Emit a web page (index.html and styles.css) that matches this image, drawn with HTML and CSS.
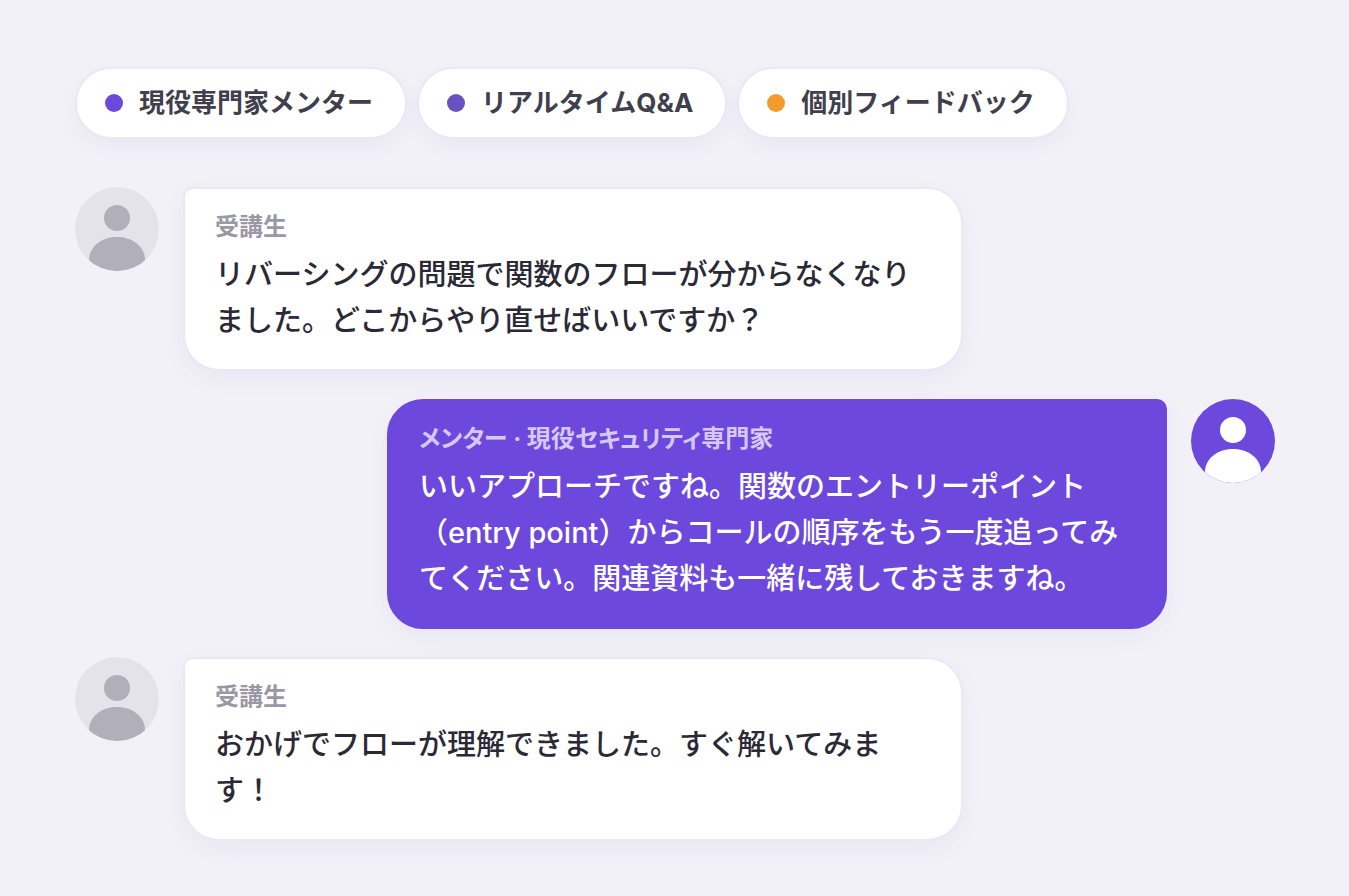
FILE: index.html
```
<!DOCTYPE html>
<html lang="ja">
<head>
    <meta charset="UTF-8">
    <meta name="viewport" content="width=device-width, initial-scale=1.0">
    <title>メンター Q&amp;A</title>
    <link rel="stylesheet" href="styles.css">
</head>
<body>
    <main class="container">
        <ul class="chips">
            <li class="chip"><span class="dot"></span>現役専門家メンター</li>
            <li class="chip"><span class="dot dot-indigo"></span>リアルタイムQ&amp;A</li>
            <li class="chip"><span class="dot dot-orange"></span>個別フィードバック</li>
        </ul>

        <div class="chat">
            <div class="message">
                <svg class="avatar" viewBox="0 0 84 84" aria-hidden="true">
                    <circle cx="42" cy="31" r="13"/>
                    <path d="M14 73C14 60 26 50 42 50S70 60 70 73V84H14Z"/>
                </svg>
                <div class="bubble">
                    <div class="name">受講生</div>
                    <p>リバーシングの問題で関数のフローが分からなくなりました。どこからやり直せばいいですか？</p>
                </div>
            </div>

            <div class="message mentor">
                <svg class="avatar" viewBox="0 0 84 84" aria-hidden="true">
                    <circle cx="42" cy="31" r="13"/>
                    <path d="M14 73C14 60 26 50 42 50S70 60 70 73V84H14Z"/>
                </svg>
                <div class="bubble">
                    <div class="name">メンター · 現役セキュリティ専門家</div>
                    <p>いいアプローチですね。関数のエントリーポイント（entry point）からコールの順序をもう一度追ってみてください。関連資料も一緒に残しておきますね。</p>
                </div>
            </div>

            <div class="message">
                <svg class="avatar" viewBox="0 0 84 84" aria-hidden="true">
                    <circle cx="42" cy="31" r="13"/>
                    <path d="M14 73C14 60 26 50 42 50S70 60 70 73V84H14Z"/>
                </svg>
                <div class="bubble">
                    <div class="name">受講生</div>
                    <p>おかげでフローが理解できました。すぐ解いてみます！</p>
                </div>
            </div>
        </div>
    </main>
</body>
</html>
```
FILE: styles.css
```
* {
    box-sizing: border-box;
}
body {
    margin: 0;
    background-color: #f2f1f8;
    color: #2b2936;
    font-family: Inter, "Noto Sans CJK JP", sans-serif;
}
.container {
    padding: 67px 74px 55px 75px;
}
.chips {
    display: flex;
    flex-wrap: wrap;
    gap: 10px;
    margin: 0 0 48px;
    padding: 0;
    list-style: none;
}
.chip {
    display: flex;
    align-items: center;
    gap: 16px;
    padding: 16px 32px 16px 28px;
    border: 2px solid #eae8f3;
    border-radius: 36px;
    background-color: #fff;
    box-shadow: 0 8px 20px rgba(80, 60, 160, 0.05);
    color: #413f4d;
    font-size: 26px;
    font-weight: 700;
    line-height: 36px;
}
.dot {
    width: 18px;
    height: 18px;
    border-radius: 50%;
    background-color: #6c48dd;
}
.dot-indigo {
    background-color: #6852c0;
}
.dot-orange {
    background-color: #f29d2b;
}
.chat {
    display: flex;
    flex-direction: column;
    gap: 28px;
}
.message {
    display: flex;
    align-items: flex-start;
    gap: 24px;
}
.avatar {
    flex: none;
    width: 84px;
    height: 84px;
    border-radius: 50%;
    overflow: hidden;
    background-color: #e4e3e9;
    fill: #b0afba;
}
.bubble {
    width: 65%;
    padding: 22px 30px 25px;
    border: 2px solid #eae8f3;
    border-radius: 10px 36px 36px 36px;
    background-color: #fff;
    box-shadow: 0 8px 24px rgba(80, 60, 160, 0.06);
}
.name {
    margin-bottom: 9px;
    color: #9a98a5;
    font-size: 24px;
    font-weight: 700;
    font-feature-settings: "palt";
    line-height: 32px;
}
.bubble p {
    margin: 0;
    font-size: 29px;
    font-weight: 500;
    line-height: 46px;
}
.mentor {
    flex-direction: row-reverse;
}
.mentor .avatar {
    background-color: #6c48dd;
    fill: #fff;
}
.mentor .bubble {
    border-color: #6c48dd;
    border-radius: 36px 10px 36px 36px;
    background-color: #6c48dd;
    color: #fff;
}
.mentor .name {
    color: #d6c9f7;
}
```
